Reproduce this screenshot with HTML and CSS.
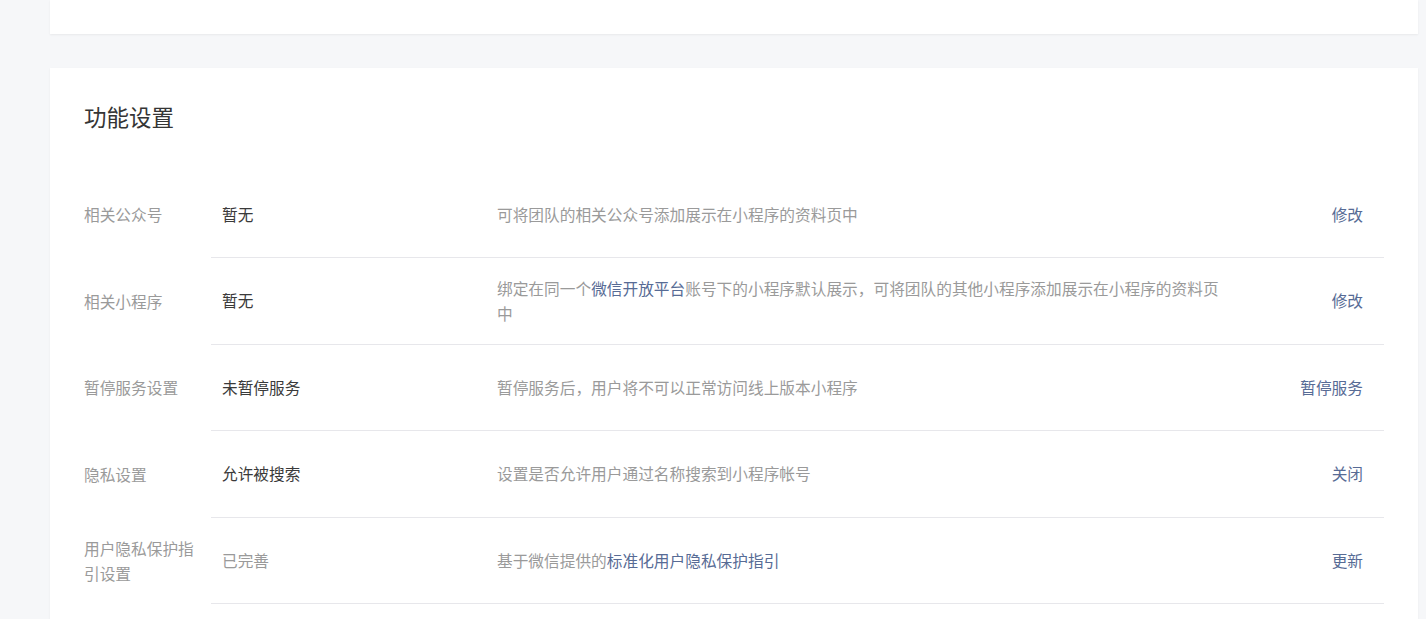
FILE: index.html
```html
<!DOCTYPE html>
<html lang="zh-CN">
<head>
  <meta charset="UTF-8">
  <title>功能设置</title>
  <link rel="stylesheet" href="styles.css">
</head>
<body>
  <div class="main">
    <div class="card card-top"></div>
    <div class="card card-setting">
      <h3 class="card-title">功能设置</h3>
      <ul class="setting-list">
        <li class="setting-item">
          <div class="setting-label">相关公众号</div>
          <div class="setting-body">
            <div class="setting-value">暂无</div>
            <div class="setting-desc">可将团队的相关公众号添加展示在小程序的资料页中</div>
            <a class="setting-action" href="#">修改</a>
          </div>
        </li>
        <li class="setting-item">
          <div class="setting-label">相关小程序</div>
          <div class="setting-body">
            <div class="setting-value">暂无</div>
            <div class="setting-desc">绑定在同一个<a class="link" href="#">微信开放平台</a>账号下的小程序默认展示，可将团队的其他小程序添加展示在小程序的资料页中</div>
            <a class="setting-action" href="#">修改</a>
          </div>
        </li>
        <li class="setting-item">
          <div class="setting-label">暂停服务设置</div>
          <div class="setting-body">
            <div class="setting-value">未暂停服务</div>
            <div class="setting-desc">暂停服务后，用户将不可以正常访问线上版本小程序</div>
            <a class="setting-action" href="#">暂停服务</a>
          </div>
        </li>
        <li class="setting-item">
          <div class="setting-label">隐私设置</div>
          <div class="setting-body">
            <div class="setting-value">允许被搜索</div>
            <div class="setting-desc">设置是否允许用户通过名称搜索到小程序帐号</div>
            <a class="setting-action" href="#">关闭</a>
          </div>
        </li>
        <li class="setting-item">
          <div class="setting-label">用户隐私保护指引设置</div>
          <div class="setting-body">
            <div class="setting-value setting-value-muted">已完善</div>
            <div class="setting-desc">基于微信提供的<a class="link" href="#">标准化用户隐私保护指引</a></div>
            <a class="setting-action" href="#">更新</a>
          </div>
        </li>
      </ul>
    </div>
  </div>
</body>
</html>
```

FILE: styles.css
```css
body{
  margin: 0;
  background-color: #f6f7f9;
  font-family: "Noto Sans CJK SC", "Noto Sans", sans-serif;
  font-size: 15.7px;
  color: #353535;
}
a{
  text-decoration: none;
}
.main{
  padding: 0 8px 0 50px;
}
.card{
  background-color: #fff;
  box-shadow: 0 1px 2px rgba(0,0,0,0.06);
}
.card-top{
  height: 34px;
  margin-bottom: 34px;
}
.card-setting{
  padding: 33px 34px 40px;
}
.card-title{
  margin: 0 0 40.5px;
  font-size: 22.5px;
  font-weight: normal;
  line-height: 30px;
  color: #353535;
}
.setting-list{
  list-style: none;
  margin: 0;
  padding: 0;
}
.setting-item{
  display: flex;
  align-items: center;
}
.setting-label{
  width: 117px;
  padding-right: 10px;
  flex-shrink: 0;
  color: #9a9a9a;
  line-height: 25px;
}
.setting-body{
  flex: 1;
  display: flex;
  align-items: center;
  min-height: 85.5px;
  padding: 0 21px 0 11px;
  border-bottom: 1px solid #e7e7eb;
  line-height: 25px;
}
.setting-value{
  width: 275px;
  flex-shrink: 0;
  color: #3a3a3a;
}
.setting-value-muted{
  color: #9a9a9a;
}
.setting-desc{
  width: 730px;
  color: #9a9a9a;
}
.link{
  color: #576b95;
}
.setting-action{
  margin-left: auto;
  color: #576b95;
}
```
